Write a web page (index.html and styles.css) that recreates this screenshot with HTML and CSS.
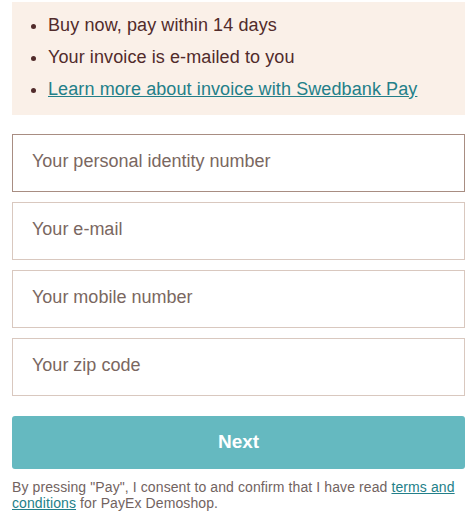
FILE: index.html
```
<!DOCTYPE html>
<html>
<head>
<meta charset="utf-8">
<link rel="stylesheet" href="styles.css">
</head>
<body>
<div class="page">
  <div class="info">
    <ul class="points">
      <li>Buy now, pay within 14 days</li>
      <li>Your invoice is e-mailed to you</li>
      <li><a href="#" class="link">Learn more about invoice with Swedbank Pay</a></li>
    </ul>
  </div>
  <form class="form">
    <input class="field field-focus" type="text" placeholder="Your personal identity number">
    <input class="field" type="text" placeholder="Your e-mail">
    <input class="field" type="text" placeholder="Your mobile number">
    <input class="field" type="text" placeholder="Your zip code">
    <button type="button" class="next">Next</button>
  </form>
  <p class="terms">By pressing "Pay", I consent to and confirm that I have read <a href="#" class="link">terms and conditions</a> for PayEx Demoshop.</p>
</div>
</body>
</html>
```
FILE: styles.css
```
* { box-sizing: border-box; }
body {
  margin: 0;
  background: #fff;
  font-family: "Liberation Sans", Arial, sans-serif;
}
.page {
  padding: 2px 10px 0 12px;
}
.info {
  background: #faf0e8;
  padding: 7px 0 10px;
}
.points {
  margin: 0;
  padding-left: 36px;
  color: #512b2b;
  font-size: 18px;
  line-height: 32px;
  letter-spacing: 0.1px;
}
.link {
  color: #237f89;
  text-decoration: underline;
}
.form {
  display: flex;
  flex-direction: column;
  gap: 10px;
  margin-top: 19px;
}
.field {
  display: block;
  width: 100%;
  height: 58px;
  border: 1px solid #d9c8bf;
  border-radius: 0;
  padding: 0 19px 4px;
  font-family: "Liberation Sans", Arial, sans-serif;
  font-size: 18px;
  color: #512b2b;
  background: #fff;
  outline: none;
}
.field::placeholder {
  color: #7a6761;
  opacity: 1;
}
.field-focus {
  border-color: #a88d82;
}
.next {
  margin-top: 10px;
  height: 53px;
  border: none;
  border-radius: 3px;
  background: #65b9c0;
  color: #fff;
  font-family: "Liberation Sans", Arial, sans-serif;
  font-weight: bold;
  font-size: 19px;
  padding-bottom: 2px;
}
.terms {
  margin: 10px 0 0;
  font-size: 14px;
  line-height: 16px;
  letter-spacing: 0.1px;
  color: #72635f;
}
```
